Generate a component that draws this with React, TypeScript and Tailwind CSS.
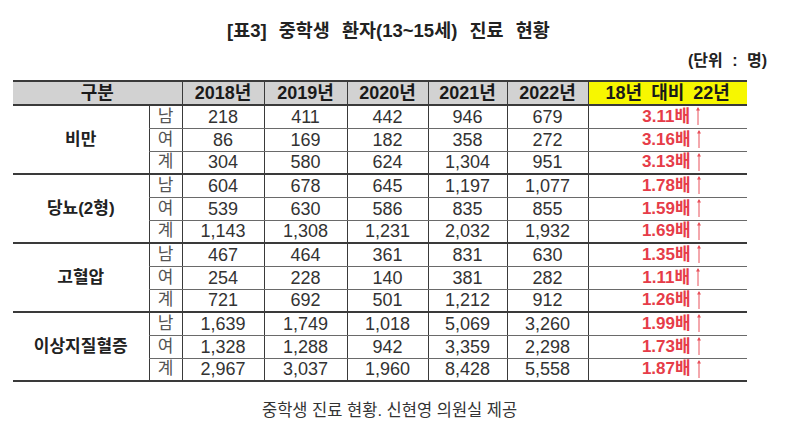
import { FC } from 'react'

type Group = {
    name: string
    rows: { sex: string; values: string[]; ratio: string }[]
}

const groups: Group[] = [
    {
        name: '비만',
        rows: [
            { sex: '남', values: ['218', '411', '442', '946', '679'], ratio: '3.11배' },
            { sex: '여', values: ['86', '169', '182', '358', '272'], ratio: '3.16배' },
            { sex: '계', values: ['304', '580', '624', '1,304', '951'], ratio: '3.13배' },
        ],
    },
    {
        name: '당뇨(2형)',
        rows: [
            { sex: '남', values: ['604', '678', '645', '1,197', '1,077'], ratio: '1.78배' },
            { sex: '여', values: ['539', '630', '586', '835', '855'], ratio: '1.59배' },
            { sex: '계', values: ['1,143', '1,308', '1,231', '2,032', '1,932'], ratio: '1.69배' },
        ],
    },
    {
        name: '고혈압',
        rows: [
            { sex: '남', values: ['467', '464', '361', '831', '630'], ratio: '1.35배' },
            { sex: '여', values: ['254', '228', '140', '381', '282'], ratio: '1.11배' },
            { sex: '계', values: ['721', '692', '501', '1,212', '912'], ratio: '1.26배' },
        ],
    },
    {
        name: '이상지질혈증',
        rows: [
            { sex: '남', values: ['1,639', '1,749', '1,018', '5,069', '3,260'], ratio: '1.99배' },
            { sex: '여', values: ['1,328', '1,288', '942', '3,359', '2,298'], ratio: '1.73배' },
            { sex: '계', values: ['2,967', '3,037', '1,960', '8,428', '5,558'], ratio: '1.87배' },
        ],
    },
]

const years = ['2018년', '2019년', '2020년', '2021년', '2022년']

const UpArrow: FC = () => (
    <svg width="6" height="19" viewBox="0 0 6 19" className="inline-block ml-[5px] -mt-[3px] align-middle">
        <line x1="3" y1="2" x2="3" y2="19" stroke="#e8505a" strokeWidth="1" />
        <path d="M1 4.5 L3 1 L5 4.5 Z" fill="#e8505a" />
    </svg>
)

const App: FC = () => {
    return (
        <div
            className="w-[800px] h-[432px] bg-white text-[#2a2a2a] overflow-hidden"
            style={{ fontFamily: '"Liberation Sans", "Noto Sans CJK KR", sans-serif' }}
        >
            <div className="pt-[20px] pl-[227px] text-[18.5px] font-bold leading-[22px] text-[#222] [word-spacing:7px]">
                [표3] 중학생 환자(13~15세) 진료 현황
            </div>
            <div className="mt-[10px] pr-[33px] text-right text-[16px] font-bold leading-[18px] text-[#222] [word-spacing:5px]">
                (단위 : 명)
            </div>

            <table className="ml-[13px] mt-[10px] w-[734px] border-collapse table-fixed text-[18px]">
                <colgroup>
                    <col className="w-[136px]" />
                    <col className="w-[33px]" />
                    <col className="w-[82px]" />
                    <col className="w-[83px]" />
                    <col className="w-[81px]" />
                    <col className="w-[79px]" />
                    <col className="w-[81px]" />
                    <col className="w-[159px]" />
                </colgroup>
                <thead>
                    <tr className="h-[24px] leading-[20px] text-[#1a1a1a]">
                        <th colSpan={2} className="bg-[#d2d2d2] border-t-2 border-b-2 border-[#3a3a3a] font-bold">
                            구분
                        </th>
                        {years.map((y) => (
                            <th
                                key={y}
                                className="bg-[#d2d2d2] border-t-2 border-b-2 border-l border-[#3a3a3a] font-bold"
                            >
                                {y}
                            </th>
                        ))}
                        <th className="bg-[#f7f700] border-t-2 border-b-2 border-l border-[#3a3a3a] font-bold [word-spacing:4px]">
                            18년 대비 22년
                        </th>
                    </tr>
                </thead>
                <tbody>
                    {groups.map((g) =>
                        g.rows.map((r, i) => {
                            const last = i === g.rows.length - 1
                            const rowBorder = last ? 'border-b-2 border-b-[#3a3a3a]' : 'border-b border-b-[#6a6a6a]'
                            return (
                                <tr key={g.name + r.sex} className="h-[23px] leading-[20px]">
                                    {i === 0 && (
                                        <td
                                            rowSpan={3}
                                            className="text-center text-[17px] font-bold text-[#222] border-b-2 border-b-[#3a3a3a]"
                                        >
                                            {g.name}
                                        </td>
                                    )}
                                    <td
                                        className={`text-center text-[17px] text-[#555] border-l border-l-[#3a3a3a] ${rowBorder}`}
                                    >
                                        {r.sex}
                                    </td>
                                    {r.values.map((v, j) => (
                                        <td
                                            key={j}
                                            className={`text-center text-[#333] border-l border-l-[#3a3a3a] ${rowBorder}`}
                                        >
                                            {v}
                                        </td>
                                    ))}
                                    <td
                                        className={`text-center text-[17px] font-bold text-[#e63c48] border-l border-l-[#3a3a3a] ${rowBorder}`}
                                    >
                                        <span className="pl-[8px]">{r.ratio}</span>
                                        <UpArrow />
                                    </td>
                                </tr>
                            )
                        })
                    )}
                </tbody>
            </table>

            <div className="mt-[18px] pl-[262px] text-[16.5px] leading-[20px] text-[#333]">
                중학생 진료 현황. 신현영 의원실 제공
            </div>
        </div>
    )
}

export default App
